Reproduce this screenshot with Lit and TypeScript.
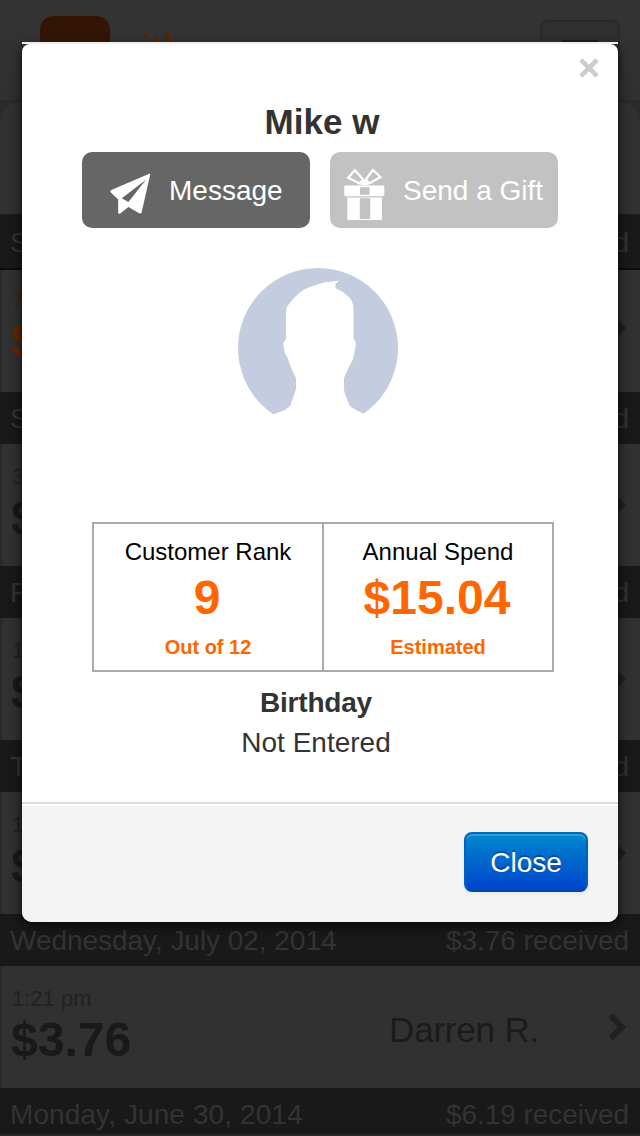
import { LitElement, html, css, svg } from "lit";
import { customElement, property } from "lit/decorators.js";

interface Payment {
  day: string;
  total: string;
  time: string;
  amount: string;
  name?: string;
  fresh?: boolean;
}

const PAYMENTS: Payment[] = [
  { day: "S", total: "d", time: "7", amount: "$", fresh: true },
  { day: "S", total: "d", time: "3", amount: "$" },
  { day: "F", total: "d", time: "1", amount: "$" },
  { day: "T", total: "d", time: "1", amount: "$" },
  { day: "Wednesday, July 02, 2014", total: "$3.76 received", time: "1:21 pm", amount: "$3.76", name: "Darren R." },
];

@customElement("payment-list")
class PaymentList extends LitElement {
  static styles = css`
    :host { display: block; }
    .bar {
      box-sizing: border-box;
      height: 52px;
      padding: 0 11px 0 10px;
      display: flex;
      justify-content: space-between;
      background: #191919;
      color: #333;
      font-size: 28px;
      line-height: 53px;
      letter-spacing: -0.04px;
    }
    .first { height: 56px; line-height: 55px; border-bottom: 2px solid #0c0c0c; border-top: 1px solid #1c1c1c; }
    .last { height: 46px; }
    .last .day { letter-spacing: 0.1px; }
    .row {
      box-sizing: border-box;
      height: 122px;
      padding: 20px 14px 0 10px;
      display: flex;
      align-items: flex-start;
      justify-content: space-between;
      background: #313131;
      border-left: 2px solid #292929;
      color: #191919;
    }
    .left { display: flex; flex-direction: column; }
    .time { font-size: 22px; line-height: 26px; color: #222; }
    .amount { font-size: 48px; line-height: 54px; font-weight: bold; margin: 1px 0 0 -1px; }
    .fresh { padding-top: 17px; }
    .fresh .time { color: #4a2108; }
    .fresh .amount { color: #662900; }
    .right { display: flex; align-items: center; height: 82px; }
    .name { font-size: 35px; line-height: 40px; letter-spacing: -0.2px; margin-right: 69px; padding-top: 6px; color: #1b1b1b; }
    .chevron { display: block; width: 18px; height: 28px; }
    .next { height: 2px; background: #2b2828; }
  `;

  render() {
    return html`
      ${PAYMENTS.map(
        (p, i) => html`
          <div class="bar ${i === 0 ? "first" : ""}"><span class="day">${p.day}</span><span>${p.total}</span></div>
          <div class="row ${p.fresh ? "fresh" : ""}">
            <div class="left"><span class="time">${p.time}</span><span class="amount">${p.amount}</span></div>
            <div class="right">
              ${p.name ? html`<span class="name">${p.name}</span>` : ""}
              <svg class="chevron" viewBox="0 0 18 28"><path d="M2.6 2.6 14 14 2.6 25.4" fill="none" stroke="#202020" stroke-width="6"/></svg>
            </div>
          </div>
        `
      )}
      <div class="bar last"><span class="day">Monday, June 30, 2014</span><span>$6.19 received</span></div>
      <div class="next"></div>
    `;
  }
}

const plane = svg`
  <path d="M39.2 0.8Q40.4 0.3 40.2 1.6L31.6 39.4Q30.9 41 29.2 40.2L18.4 34 10.2 40.6Q8.2 41.4 8.2 39.4V26.6L0.8 19.4Q-0.4 18 1.4 17Z" fill="#fff"/>
  <path d="M36 6.8 11.8 25.2 18.4 29Z" fill="#666"/>`;

const gift = svg`
  <path d="M4.2 9.8 10.8 2.2 19.2 11.5 15.6 15.4Z" fill="none" stroke="#fff" stroke-width="2.2"/>
  <path d="M36.4 9 29 2 21.8 11.5 25.4 15.4Z" fill="none" stroke="#fff" stroke-width="2.2"/>
  <path d="M16.7 17.2V15.5Q17 11.4 20.5 11.4T24.4 15.5V17.2Z" fill="#fff"/>
  <rect x="0.3" y="17.4" width="40" height="10.8" rx="1.2" fill="#fff"/>
  <rect x="16" y="19.2" width="9.6" height="7.6" fill="#c2c2c2"/>
  <path d="M3.3 29.4H38V51Q38 52 37 52H4.3Q3.3 52 3.3 51Z" fill="#fff"/>
  <rect x="15.8" y="30.2" width="10.4" height="20.8" fill="#c2c2c2"/>`;

@customElement("customer-modal")
class CustomerModal extends LitElement {
  @property() name = "Mike w";

  static styles = css`
    :host { display: block; color: #333; }
    .edge { position: relative; z-index: 1; height: 2px; background: #eee; }
    .card {
      display: flex;
      flex-direction: column;
      height: 878px;
      background: #fff;
      border-radius: 8px 8px 10px 10px;
      box-shadow: 0 3px 12px rgba(0, 0, 0, 0.8);
      overflow: hidden;
    }
    .body { flex: 1; display: flex; flex-direction: column; align-items: center; }
    .top { align-self: stretch; display: flex; justify-content: flex-end; padding: 14px 19px 0 0; height: 44px; box-sizing: border-box; }
    .x { width: 20px; height: 20px; display: block; }
    .title { font-size: 35px; line-height: 40px; font-weight: bold; margin: 14px 0 10px; padding-left: 4px; }
    .actions { display: flex; gap: 20px; }
    .action {
      box-sizing: border-box;
      width: 228px;
      height: 76px;
      border-radius: 10px;
      display: flex;
      background: #666;
      color: #fff;
      font-size: 28px;
      line-height: 78px;
      padding-left: 27px;
      gap: 18px;
    }
    .action svg { display: block; width: 42px; height: 42px; margin-top: 21px; flex: none; }
    .action .plane { margin-left: 1px; width: 41px; }
    .gift { background: #c2c2c2; padding-left: 14px; }
    .gift svg { height: 52px; margin-top: 16px; width: 41px; }
    .avatar { display: block; width: 160px; height: 160px; margin: 40px 4px 0 0; }
    .stats {
      box-sizing: border-box;
      width: 462px;
      height: 150px;
      margin: 94px 0 0 6px;
      display: grid;
      grid-template-columns: 228px 1fr;
      border: 2px solid #aaa;
    }
    .stat { display: flex; flex-direction: column; align-items: center; color: #f60; font-weight: bold; }
    .stat + .stat { border-left: 2px solid #aaa; }
    .label { color: #000; font-weight: normal; font-size: 24px; line-height: 28px; margin-top: 14px; }
    .value { font-size: 48px; line-height: 56px; margin: 4px 2px 0 0; }
    .note { font-size: 20px; line-height: 24px; margin-top: 9px; }
    .bday { font-size: 28px; line-height: 40px; font-weight: bold; margin-top: 11px; letter-spacing: -0.2px; margin-right: 8px; }
    .entered { font-size: 28px; line-height: 40px; margin-right: 8px; }
    .foot {
      flex: none;
      box-sizing: border-box;
      height: 120px;
      border-top: 2px solid #ddd;
      box-shadow: inset 0 2px 0 #fff;
      background: #f4f4f4;
      padding: 28px 30px 0;
      display: flex;
      justify-content: flex-end;
    }
    .close {
      box-sizing: border-box;
      width: 124px;
      height: 60px;
      border-radius: 8px;
      border: 2px solid;
      border-color: #0068bb #0062c0 #004aa4;
      background: linear-gradient(#0088cc, #0044cc);
      box-shadow: inset 0 2px 0 rgba(255, 255, 255, 0.2), 0 2px 4px rgba(0, 0, 0, 0.05);
      color: #fff;
      font-size: 28px;
      line-height: 57px;
      text-align: center;
      text-shadow: 0 -2px 0 rgba(0, 0, 0, 0.25);
    }
  `;

  render() {
    return html`
      <div class="edge"></div>
      <div class="card">
        <div class="body">
          <div class="top">
            <svg class="x" viewBox="0 0 20 20"><path d="M3.6 3.6 16.4 16.4M16.4 3.6 3.6 16.4" stroke="#ccc" stroke-width="4.6" stroke-linecap="square"/></svg>
          </div>
          <div class="title">${this.name}</div>
          <div class="actions">
            <div class="action"><svg class="plane" viewBox="0 0 41 42">${plane}</svg><span>Message</span></div>
            <div class="action gift"><svg viewBox="0 0 41 52">${gift}</svg><span>Send a Gift</span></div>
          </div>
          <svg class="avatar" viewBox="0 0 160 160">
            <circle cx="80" cy="80" r="80" fill="#c4cce0"/>
            <path d="M48 71V44Q48 39 51 36L56 30Q63 22 73 18.5L86 14.5 101 12.5 97.5 16V20L105 24 112 30Q115.5 35 115.5 42V70L118 75 117 82 115 91 110 101 106 110V122L108 129 112 138 118 142 126 146V160H36V146L47 142 52 138 56 127 58 121V110L54 102 50 91 46.5 84 45 75Z" fill="#fff"/>
          </svg>
          <div class="stats">
            <div class="stat"><span class="label">Customer Rank</span><span class="value">9</span><span class="note">Out of 12</span></div>
            <div class="stat"><span class="label">Annual Spend</span><span class="value">$15.04</span><span class="note">Estimated</span></div>
          </div>
          <div class="bday">Birthday</div>
          <div class="entered">Not Entered</div>
        </div>
        <div class="foot"><div class="close">Close</div></div>
      </div>
    `;
  }
}

@customElement("app-root")
class AppRoot extends LitElement {
  static styles = css`
    :host {
      display: block;
      position: relative;
      width: 640px;
      height: 1136px;
      overflow: hidden;
      background: #2b2b2b;
      font-family: "Liberation Sans", Arial, sans-serif;
    }
    .head {
      box-sizing: border-box;
      height: 102px;
      border-bottom: 2px solid #2a2a2a;
      background: linear-gradient(#343434, #303030);
      padding: 16px 20px 0 40px;
      display: flex;
    }
    .logo { width: 70px; height: 70px; border-radius: 14px; background: #331505; }
    .brand { font-size: 36px; line-height: 40px; font-weight: bold; color: #5f2404; margin: 13px 0 0 32px; flex: 1; }
    .menu {
      box-sizing: border-box;
      width: 80px;
      height: 60px;
      margin-top: 4px;
      border: 2px solid #292929;
      border-radius: 8px;
      background: #2f2f2f;
      padding: 18px 20px;
    }
    .line { height: 4px; background: #1c1c1c; }
    .panel { height: 112px; background: #313131; border-radius: 20px 20px 0 0; }
    .modal { position: absolute; left: 22px; top: 42px; width: 596px; }
  `;

  render() {
    return html`
      <div class="head">
        <div class="logo"></div>
        <div class="brand">ith</div>
        <div class="menu"><div class="line"></div></div>
      </div>
      <div class="panel"></div>
      <payment-list></payment-list>
      <customer-modal class="modal"></customer-modal>
    `;
  }
}
